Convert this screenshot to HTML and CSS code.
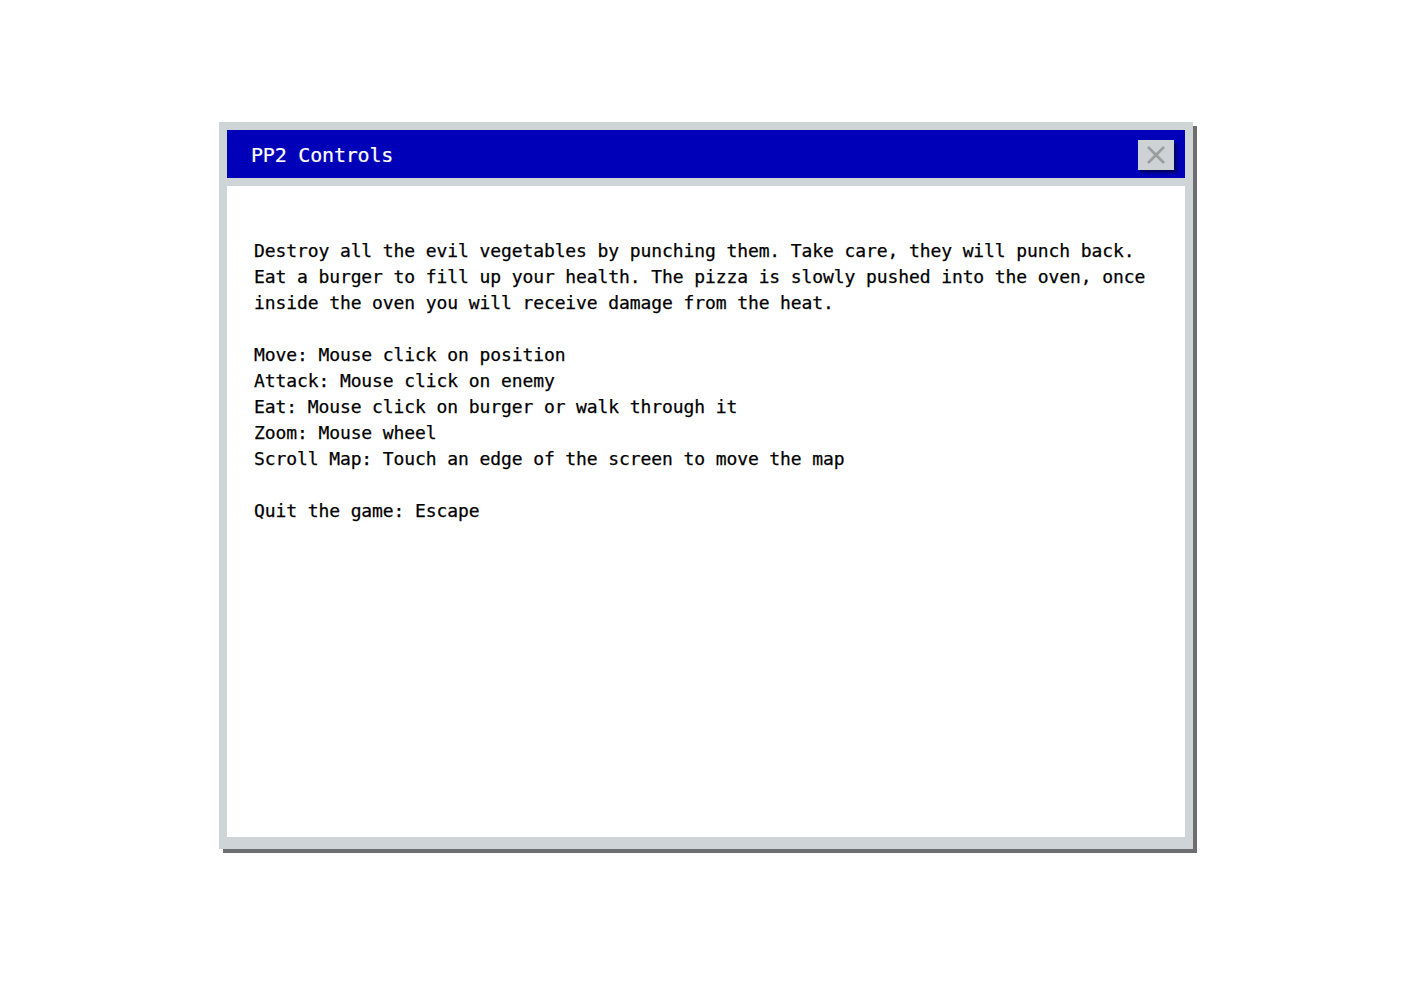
FILE: index.html
```html
<!DOCTYPE html>
<html>
<head>
<meta charset="utf-8">
<link rel="stylesheet" href="styles.css">
</head>
<body>
<div class="page">
  <div class="window">
    <div class="titlebar">
      <span class="title">PP2 Controls</span>
      <button class="close" aria-label="Close">
        <svg width="20" height="20" viewBox="0 0 20 20"><path d="M2 2 L18 18 M18 2 L2 18" stroke="#9a9c9e" stroke-width="2.6" fill="none"/></svg>
      </button>
    </div>
    <div class="content">
      <p>Destroy all the evil vegetables by punching them. Take care, they will punch back.<br>Eat a burger to fill up your health. The pizza is slowly pushed into the oven, once<br>inside the oven you will receive damage from the heat.</p>
      <p>Move: Mouse click on position<br>Attack: Mouse click on enemy<br>Eat: Mouse click on burger or walk through it<br>Zoom: Mouse wheel<br>Scroll Map: Touch an edge of the screen to move the map</p>
      <p>Quit the game: Escape</p>
    </div>
  </div>
</div>
</body>
</html>
```

FILE: styles.css
```css
html, body {
  margin: 0;
  padding: 0;
  background: #ffffff;
}
body {
  font-family: "DejaVu Sans Mono", "Liberation Mono", monospace;
  color: #000;
}
.page {
  padding: 122px 0 40px 219px;
}
.window {
  width: 958px;
  background: #cfd4d7;
  padding: 8px 8px 12px 8px;
  box-shadow: 4px 4px 0 0 #6c6e70;
}
.titlebar {
  height: 48px;
  background: #0000b8;
  display: flex;
  align-items: center;
  justify-content: space-between;
  padding: 0 11px 0 24px;
}
.title {
  color: #ffffff;
  font-size: 20px;
  letter-spacing: -0.2px;
  margin-top: 2px;
  -webkit-text-stroke: 0.2px #ffffff;
}
.close {
  width: 36px;
  height: 30px;
  margin-top: 2px;
  padding: 0;
  border: none;
  background: #cdd2d5;
  box-shadow: 3px 3px 2px #00006a;
  display: flex;
  align-items: center;
  justify-content: center;
}
.content {
  margin-top: 8px;
  background: #ffffff;
  height: 599px;
  padding: 52px 27px 0 27px;
  font-size: 18px;
  line-height: 26px;
  letter-spacing: -0.1px;
  -webkit-text-stroke: 0.25px #000000;
}
.content p {
  margin: 0 0 26px 0;
  white-space: nowrap;
}
```
